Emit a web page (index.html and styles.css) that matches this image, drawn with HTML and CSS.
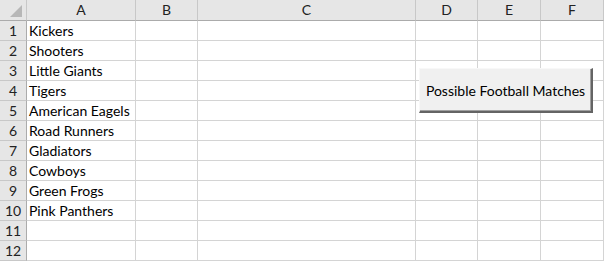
FILE: index.html
```html
<!DOCTYPE html>
<html>
<head>
<meta charset="utf-8">
<link rel="stylesheet" href="styles.css">
</head>
<body>
<div class="sheet">
  <div class="grid">
    <div class="corner"><span class="tri"></span></div>
    <div class="ch">A</div><div class="ch">B</div><div class="ch">C</div><div class="ch">D</div><div class="ch">E</div><div class="ch last">F</div>

    <div class="rh">1</div><div class="c">Kickers</div><div class="c"></div><div class="c"></div><div class="c"></div><div class="c"></div><div class="c"></div>
    <div class="rh">2</div><div class="c">Shooters</div><div class="c"></div><div class="c"></div><div class="c"></div><div class="c"></div><div class="c"></div>
    <div class="rh">3</div><div class="c">Little Giants</div><div class="c"></div><div class="c"></div><div class="c"></div><div class="c"></div><div class="c"></div>
    <div class="rh">4</div><div class="c">Tigers</div><div class="c"></div><div class="c"></div><div class="c"></div><div class="c"></div><div class="c"></div>
    <div class="rh">5</div><div class="c">American Eagels</div><div class="c"></div><div class="c"></div><div class="c"></div><div class="c"></div><div class="c"></div>
    <div class="rh">6</div><div class="c">Road Runners</div><div class="c"></div><div class="c"></div><div class="c"></div><div class="c"></div><div class="c"></div>
    <div class="rh">7</div><div class="c">Gladiators</div><div class="c"></div><div class="c"></div><div class="c"></div><div class="c"></div><div class="c"></div>
    <div class="rh">8</div><div class="c">Cowboys</div><div class="c"></div><div class="c"></div><div class="c"></div><div class="c"></div><div class="c"></div>
    <div class="rh">9</div><div class="c">Green Frogs</div><div class="c"></div><div class="c"></div><div class="c"></div><div class="c"></div><div class="c"></div>
    <div class="rh">10</div><div class="c">Pink Panthers</div><div class="c"></div><div class="c"></div><div class="c"></div><div class="c"></div><div class="c"></div>
    <div class="rh">11</div><div class="c"></div><div class="c"></div><div class="c"></div><div class="c"></div><div class="c"></div><div class="c"></div>
    <div class="rh">12</div><div class="c"></div><div class="c"></div><div class="c"></div><div class="c"></div><div class="c"></div><div class="c"></div>
  </div>
  <button class="btn">Possible Football Matches</button>
</div>
</body>
</html>
```

FILE: styles.css
```css
html, body {
  margin: 0;
  padding: 0;
  background: #ffffff;
}
.sheet {
  position: relative;
  width: 604px;
  height: 261px;
  overflow: hidden;
  font-family: Lato, "Liberation Sans", sans-serif;
  font-size: 14px;
  color: #000;
}
.grid {
  display: grid;
  grid-template-columns: 27px 109px 62px 218px 62px 63px 63px;
  grid-template-rows: 21px repeat(12, 20px);
}
.grid > div {
  box-sizing: border-box;
  border-right: 1px solid #d4d4d4;
  border-bottom: 1px solid #d4d4d4;
  white-space: nowrap;
  overflow: hidden;
}
.grid > .corner {
  position: relative;
  background: #e6e6e6;
  border-right: 1px solid #c8c8c8;
  border-bottom: 1px solid #ababab;
}
.tri {
  position: absolute;
  right: 4px;
  bottom: 3px;
  width: 0;
  height: 0;
  border-left: 12px solid transparent;
  border-bottom: 12px solid #b7b7b7;
}
.grid > .ch {
  background: #e6e6e6;
  border-right: 1px solid #c8c8c8;
  border-bottom: 1px solid #ababab;
  text-align: center;
  line-height: 20px;
  color: #222;
}
.grid > .rh {
  background: #e6e6e6;
  border-right: 1px solid #ababab;
  border-bottom: 1px solid #c8c8c8;
  text-align: center;
  line-height: 19px;
  color: #222;
}
.grid > .c {
  padding-left: 2px;
  line-height: 19px;
}
.btn {
  position: absolute;
  left: 419px;
  top: 68px;
  width: 174px;
  height: 45px;
  box-sizing: border-box;
  margin: 0;
  padding: 0;
  background: #f0f0f0;
  border-top: 1px solid #f8f8f8;
  border-left: 1px solid #f8f8f8;
  border-right: 2px solid #646464;
  border-bottom: 2px solid #646464;
  box-shadow: inset -1px -1px 0 #a0a0a0;
  font-family: Lato, "Liberation Sans", sans-serif;
  font-size: 14px;
  color: #000;
  text-align: center;
}
```
